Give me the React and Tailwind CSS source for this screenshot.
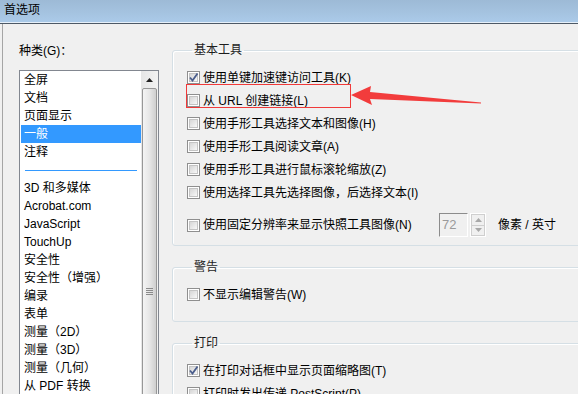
import React from 'react';

const categories = [
  '全屏', '文档', '页面显示', '一般', '注释', '-',
  '3D 和多媒体', 'Acrobat.com', 'JavaScript', 'TouchUp', '安全性', '安全性（增强）',
  '编录', '表单', '测量（2D）', '测量（3D）', '测量（几何）', '从 PDF 转换',
];

function Checkbox({ checked }) {
  return (
    <span className="w-[13px] h-[13px] shrink-0 border border-[#8f8f8f] bg-white p-[1px] flex">
      <span className="flex-1 border border-[#c4c4c4] bg-gradient-to-br from-[#d6d6d6] to-[#f8f8f8] flex items-center justify-center">
        {checked && (
          <svg width="11" height="11" viewBox="0 0 11 11" className="-m-[2px]">
            <path d="M2 5.5 L4.5 8.5 L9.5 1.5" fill="none" stroke="#4a5d8c" strokeWidth="1.8" />
          </svg>
        )}
      </span>
    </span>
  );
}

function Row({ label, checked, className = '', children }) {
  return (
    <div className={`relative flex items-center h-[23px] ${className}`}>
      <Checkbox checked={checked} />
      <span className="ml-[3px] whitespace-nowrap">{label}</span>
      {children}
    </div>
  );
}

function Group({ title, className = '', children }) {
  return (
    <fieldset className={`w-[430px] border border-[#d5dfe5] rounded-[3px] shadow-[inset_1px_1px_0_#fff] pl-[14px] ${className}`}>
      <legend className="ml-[5px] px-[2px] leading-[16px] text-[#1e1e1e]">{title}</legend>
      {children}
    </fieldset>
  );
}

export default function App() {
  return (
    <div className="w-[578px] h-[394px] overflow-hidden bg-[#f0f0f0] text-[12px] text-black flex flex-col font-['Liberation_Sans','Noto_Sans_CJK_SC',sans-serif]">
      {/* title bar */}
      <div className="h-[24px] shrink-0 bg-gradient-to-b from-[#9dbad6] via-[#a4c2df] to-[#abcbea] border-b border-[#4d5966] shadow-[inset_0_-1px_0_#e6f0fa] flex items-center pl-[4px] pb-[3px] leading-[16px]">
        首选项
      </div>

      <div className="flex flex-1 min-h-0 ml-[2px] border-l border-[#a5a5a5]">
        {/* categories */}
        <div className="w-[169px] shrink-0 pl-[16px] flex flex-col">
          <div className="mt-[19px] leading-[16px]">种类(G)：</div>
          <div className="mt-[11px] h-[340px] w-[140px] border border-[#828790] bg-white flex">
            <div className="flex-1 flex flex-col">
              {categories.map((c, i) =>
                c === '-' ? (
                  <div key={i} className="h-[18px] shrink-0 flex items-center">
                    <div className="ml-[5px] w-[112px] h-px bg-[#3399ff]" />
                  </div>
                ) : c === '一般' ? (
                  <div key={i} className="h-[18px] shrink-0 leading-[18px] ml-[1px] pl-[3px] bg-[#3399ff] text-white">{c}</div>
                ) : (
                  <div key={i} className="h-[18px] shrink-0 leading-[18px] pl-[4px] whitespace-nowrap">{c}</div>
                )
              )}
            </div>
            <div className="w-[17px] shrink-0 bg-gradient-to-r from-[#e6e6e6] to-[#f2f2f2] flex flex-col items-center overflow-hidden">
              <div className="h-[17px] w-full shrink-0 flex items-center justify-center">
                <svg width="7" height="4" viewBox="0 0 7 4"><path d="M0 4 L3.5 0 L7 4 Z" fill="#222" /></svg>
              </div>
              <div className="w-[15px] h-[406px] shrink-0 border border-[#979797] rounded-[2px] bg-gradient-to-r from-[#f4f4f4] via-[#e6e6e6] to-[#cfcfcf] flex flex-col items-center justify-center gap-[1px]">
                <div className="w-[7px] h-px bg-[#8a8a8a]" />
                <div className="w-[7px] h-px bg-[#8a8a8a]" />
                <div className="w-[7px] h-px bg-[#8a8a8a]" />
                <div className="w-[7px] h-px bg-[#8a8a8a]" />
              </div>
            </div>
          </div>
        </div>

        {/* settings */}
        <div className="flex-1 min-w-0 pt-[18px] flex flex-col">
          <Group title="基本工具" className="pt-[8px] pb-[8px]">
            <Row label="使用单键加速键访问工具(K)" checked />
            <Row label="从 URL 创建链接(L)">
              <div className="absolute left-[-1px] top-[-5px] w-[165px] h-[24px] border border-[#f03a3a]" />
              <svg className="absolute left-[162px] top-[-5px]" width="135" height="24" viewBox="0 0 135 24">
                <polygon points="2,11 22,2 21,8 132,18.5 132,19.5 21,15 23,21" fill="#f23c3c" />
              </svg>
            </Row>
            <Row label="使用手形工具选择文本和图像(H)" />
            <Row label="使用手形工具阅读文章(A)" />
            <Row label="使用手形工具进行鼠标滚轮缩放(Z)" />
            <Row label="使用选择工具先选择图像，后选择文本(I)" />
            <div className="flex items-center h-[24px] mt-[9px]">
              <Checkbox />
              <span className="ml-[3px] w-[236px] whitespace-nowrap">使用固定分辨率来显示快照工具图像(N)</span>
              <div className="w-[29px] h-[24px] border border-t-[#8c8c8c] border-l-[#8c8c8c] border-b-white border-r-white bg-[#f0f0f0] flex items-center pl-[2px] text-[#9a9a9a] text-[13px]">72</div>
              <div className="ml-[2px] w-[16px] h-[24px] border border-white flex flex-col">
                <div className="flex-1 border border-[#cfcfcf] bg-[#f0f0f0] flex items-center justify-center">
                  <svg width="7" height="4" viewBox="0 0 7 4"><path d="M0 4 L3.5 0 L7 4 Z" fill="#a8a8a8" /></svg>
                </div>
                <div className="flex-1 border border-t-0 border-[#cfcfcf] bg-[#f0f0f0] flex items-center justify-center">
                  <svg width="7" height="4" viewBox="0 0 7 4"><path d="M0 0 L3.5 4 L7 0 Z" fill="#a8a8a8" /></svg>
                </div>
              </div>
              <span className="ml-[12px] whitespace-nowrap">像素 / 英寸</span>
            </div>
          </Group>

          <Group title="警告" className="mt-[13px] pt-[8px] pb-[15px]">
            <Row label="不显示编辑警告(W)" />
          </Group>

          <Group title="打印" className="mt-[13px] pt-[8px] pb-[8px]">
            <Row label="在打印对话框中显示页面缩略图(T)" checked />
            <Row label="打印时发出传递 PostScript(P)" />
          </Group>
        </div>
      </div>
    </div>
  );
}
